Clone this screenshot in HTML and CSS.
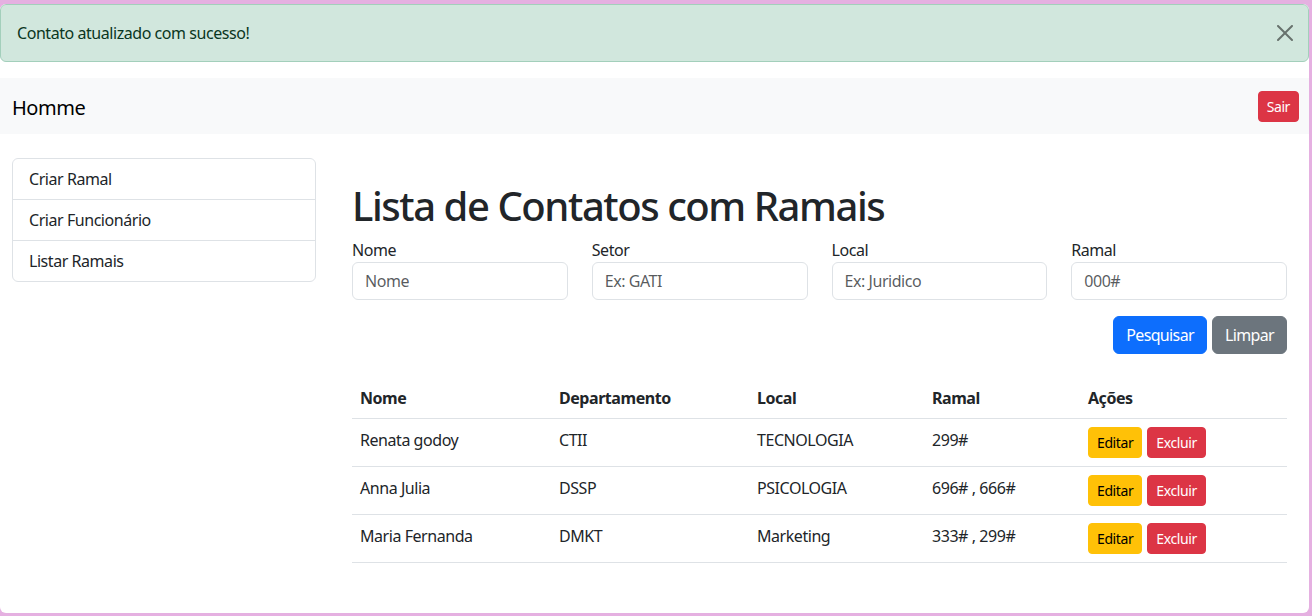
FILE: index.html
```html
<!DOCTYPE html>
<html lang="pt-BR">
<head>
<meta charset="utf-8">
<title>Lista de Contatos com Ramais</title>
<link rel="stylesheet" href="styles.css">
</head>
<body>
<div class="screen">
  <div class="alert">
    <span>Contato atualizado com sucesso!</span>
    <button class="btn-close" aria-label="Fechar">
      <svg width="16" height="16" viewBox="0 0 16 16"><path d="M.293.293a1 1 0 0 1 1.414 0L8 6.586 14.293.293a1 1 0 1 1 1.414 1.414L9.414 8l6.293 6.293a1 1 0 0 1-1.414 1.414L8 9.414l-6.293 6.293a1 1 0 0 1-1.414-1.414L6.586 8 .293 1.707a1 1 0 0 1 0-1.414z"/></svg>
    </button>
  </div>
  <nav class="navbar">
    <span class="brand">Homme</span>
    <button class="btn btn-sm btn-danger">Sair</button>
  </nav>
  <div class="main">
    <aside class="list-group">
      <a class="list-item">Criar Ramal</a>
      <a class="list-item">Criar Funcionário</a>
      <a class="list-item">Listar Ramais</a>
    </aside>
    <section class="content">
      <h1 class="title">Lista de Contatos com Ramais</h1>
      <form class="filters">
        <div class="field">
          <label>Nome</label>
          <input class="input" type="text" placeholder="Nome">
        </div>
        <div class="field">
          <label>Setor</label>
          <input class="input" type="text" placeholder="Ex: GATI">
        </div>
        <div class="field">
          <label>Local</label>
          <input class="input" type="text" placeholder="Ex: Juridico">
        </div>
        <div class="field">
          <label>Ramal</label>
          <input class="input" type="text" placeholder="000#">
        </div>
      </form>
      <div class="actions">
        <button class="btn btn-primary">Pesquisar</button>
        <button class="btn btn-secondary">Limpar</button>
      </div>
      <table class="table">
        <colgroup>
          <col class="c1"><col class="c2"><col class="c3"><col class="c4"><col class="c5">
        </colgroup>
        <thead>
          <tr><th>Nome</th><th>Departamento</th><th>Local</th><th>Ramal</th><th>Ações</th></tr>
        </thead>
        <tbody>
          <tr>
            <td>Renata godoy</td><td>CTII</td><td>TECNOLOGIA</td><td>299#</td>
            <td class="act"><div class="row-btns"><button class="btn btn-sm btn-warning">Editar</button><button class="btn btn-sm btn-danger">Excluir</button></div></td>
          </tr>
          <tr>
            <td>Anna Julia</td><td>DSSP</td><td>PSICOLOGIA</td><td>696# , 666#</td>
            <td class="act"><div class="row-btns"><button class="btn btn-sm btn-warning">Editar</button><button class="btn btn-sm btn-danger">Excluir</button></div></td>
          </tr>
          <tr>
            <td>Maria Fernanda</td><td>DMKT</td><td>Marketing</td><td>333# , 299#</td>
            <td class="act"><div class="row-btns"><button class="btn btn-sm btn-warning">Editar</button><button class="btn btn-sm btn-danger">Excluir</button></div></td>
          </tr>
        </tbody>
      </table>
    </section>
  </div>
</div>
</body>
</html>
```
FILE: styles.css
```css
* { box-sizing: border-box; }
html, body { margin: 0; padding: 0; }
body {
  background: #e5b0e1;
  font-family: "Noto Sans", "Open Sans", sans-serif;
  font-size: 16px;
  line-height: 1.5;
  letter-spacing: -0.028em;
  color: #212529;
}
.screen {
  margin: 4px 3px 0 0;
  height: 609px;
  background: #fff;
  border-radius: 6px;
  overflow: hidden;
}
.alert {
  display: flex;
  align-items: center;
  justify-content: space-between;
  height: 58px;
  padding: 0 15px 0 16px;
  margin-bottom: 16px;
  background: #d1e7dd;
  border: 1px solid #a3cfbb;
  border-radius: 6px;
  color: #0a3622;
}
.btn-close {
  display: flex;
  padding: 0;
  border: 0;
  background: none;
  opacity: .5;
}
.btn-close svg { fill: #000; }
.navbar {
  display: flex;
  align-items: center;
  justify-content: space-between;
  height: 56px;
  padding: 0 10px 0 12px;
  background: #f8f9fa;
}
.brand { font-size: 20px; color: #000; padding-top: 3px; }
.btn {
  font-family: inherit;
  font-size: 16px;
  line-height: 24px;
  letter-spacing: -0.04em;
  padding: 6px 12px;
  border: 1px solid transparent;
  border-radius: 6px;
  color: #fff;
  cursor: pointer;
}
.btn-sm {
  font-size: 14px;
  line-height: 21px;
  letter-spacing: -0.028em;
  padding: 4px 8px;
  border-radius: 4px;
}
.btn-danger { background: #dc3545; border-color: #dc3545; }
.btn-primary { background: #0d6efd; border-color: #0d6efd; }
.btn-secondary { background: #6c757d; border-color: #6c757d; }
.btn-warning { background: #ffc107; border-color: #ffc107; color: #000; }
.main {
  display: grid;
  grid-template-columns: 304px minmax(0, 1fr);
  column-gap: 36px;
  padding: 0 22px 0 12px;
  margin-top: 24px;
}
.list-group {
  display: flex;
  flex-direction: column;
  align-self: start;
  border: 1px solid #dee2e6;
  border-radius: 6px;
}
.list-item {
  padding: 8px 16px;
  color: #212529;
  border-top: 1px solid #dee2e6;
  line-height: 24px;
}
.list-item:first-child { border-top: 0; }
.content { min-width: 0; }
.title {
  margin: 24px 0 8px;
  font-size: 40px;
  line-height: 48px;
  font-weight: 500;
  letter-spacing: -0.036em;
}
.filters {
  display: grid;
  grid-template-columns: repeat(4, minmax(0, 1fr));
  column-gap: 24px;
  margin: 0;
}
.field { display: flex; flex-direction: column; min-width: 0; }
.field label { line-height: 24px; }
.input {
  width: 100%;
  min-width: 0;
  height: 38px;
  padding: 6px 12px;
  font-family: inherit;
  font-size: 16px;
  letter-spacing: inherit;
  color: #212529;
  border: 1px solid #dee2e6;
  border-radius: 6px;
  background: #fff;
}
.input::placeholder { color: rgba(33, 37, 41, .75); }
.actions {
  display: flex;
  justify-content: flex-end;
  gap: 5px;
  margin-top: 16px;
}
.table {
  width: 100%;
  margin-top: 24px;
  border-collapse: collapse;
  table-layout: fixed;
}
.c1 { width: 199px; }
.c2 { width: 198px; }
.c3 { width: 175px; }
.c4 { width: 156px; }
.c5 { width: 207px; }
.table th, .table td {
  padding: 8px;
  text-align: left;
  vertical-align: top;
  border-bottom: 1px solid #dee2e6;
  line-height: 24px;
}
.table th { font-weight: 700; }
.table td { padding-top: 9px; padding-bottom: 7px; }
.table td.act { padding-top: 8px; padding-bottom: 8px; }
.row-btns { display: flex; gap: 5px; }
```
